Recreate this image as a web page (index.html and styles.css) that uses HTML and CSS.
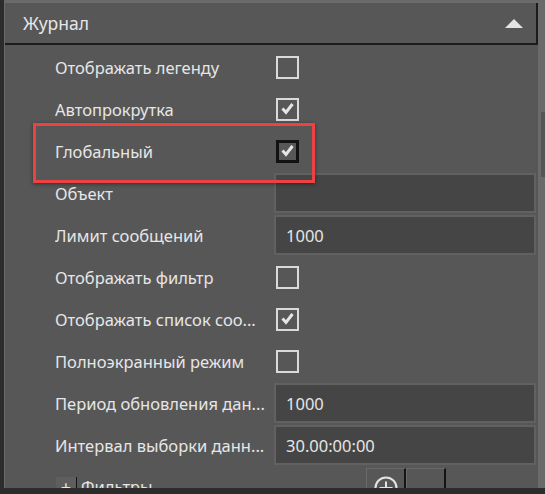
FILE: index.html
```html
<!DOCTYPE html>
<html lang="ru">
<head>
<meta charset="utf-8">
<title>Журнал</title>
<link rel="stylesheet" href="styles.css">
</head>
<body>
<div class="frame">
  <div class="panel">
    <div class="header">
      <span class="title">Журнал</span>
      <svg class="caret" width="18" height="9" viewBox="0 0 18 9"><polygon points="0,9 9,0 18,9" fill="#e4e4e4"/></svg>
    </div>
    <div class="rows">
      <div class="row"><span class="label">Отображать легенду</span><span class="check"></span></div>
      <div class="row"><span class="label">Автопрокрутка</span><span class="check"><svg class="tick" width="19" height="19" viewBox="0 0 19 19"><polyline points="4.5,8.5 8,12.5 14.5,4" fill="none" stroke="#e6e6e6" stroke-width="3"/></svg></span></div>
      <div class="row"><span class="label">Глобальный</span><span class="check focused"><svg class="tick" width="17" height="17" viewBox="0 0 17 17"><polyline points="3.5,7.5 7,11.5 13.5,3" fill="none" stroke="#e6e6e6" stroke-width="3"/></svg></span></div>
      <div class="row"><span class="label">Объект</span><span class="input"></span></div>
      <div class="row"><span class="label">Лимит сообщений</span><span class="input">1000</span></div>
      <div class="row"><span class="label">Отображать фильтр</span><span class="check"></span></div>
      <div class="row"><span class="label">Отображать список соо...</span><span class="check"><svg class="tick" width="19" height="19" viewBox="0 0 19 19"><polyline points="4.5,8.5 8,12.5 14.5,4" fill="none" stroke="#e6e6e6" stroke-width="3"/></svg></span></div>
      <div class="row"><span class="label">Полноэкранный режим</span><span class="check"></span></div>
      <div class="row"><span class="label">Период обновления дан...</span><span class="input">1000</span></div>
      <div class="row"><span class="label">Интервал выборки данн...</span><span class="input">30.00:00:00</span></div>
    </div>
    <div class="filters">
      <div class="filters-head">
        <span class="toggle">+</span>
        <span class="filters-label">Фильтры</span>
      </div>
      <span class="btn"><svg class="add" width="24" height="24" viewBox="0 0 24 24"><circle cx="12" cy="12" r="10.5" fill="none" stroke="#e4e4e4" stroke-width="2"/><path d="M12 5.5V18.5M5.5 12H18.5" stroke="#e4e4e4" stroke-width="2"/></svg></span>
      <span class="btn"></span>
    </div>
    <div class="highlight"></div>
  </div>
  <div class="scrollbar"><div class="thumb"></div></div>
</div>
</body>
</html>
```
FILE: styles.css
```css
html, body {
  margin: 0;
  padding: 0;
  background: #2c2c2c;
  width: 545px;
  height: 494px;
  overflow: hidden;
}

body {
  font-family: "Noto Sans", "Open Sans", sans-serif;
  font-size: 16.5px;
  color: #e6e6e6;
}

.frame {
  margin-left: 4px;
  height: 488px;
  padding: 3px 0 0 1px;
  box-sizing: border-box;
  background: #6a6a6a;
  display: grid;
  grid-template-columns: 533px 7px;
  overflow: hidden;
}

.panel {
  position: relative;
  background: #575757;
  overflow: hidden;
}

.header {
  height: 40px;
  border-bottom: 2px solid #1c1c1c;
  border-right: 2px solid #1c1c1c;
  display: flex;
  align-items: center;
  justify-content: space-between;
  padding: 0 13px 0 18px;
}

.title {
  font-size: 17.5px;
}

.caret {
  display: block;
  margin-top: 1px;
}

.rows {
  padding-top: 1px;
}

.row {
  height: 42px;
  display: grid;
  grid-template-columns: 219px 262px;
  padding-left: 50px;
  align-items: center;
}

.label {
  white-space: nowrap;
  overflow: hidden;
}

.check {
  width: 23px;
  height: 23px;
  box-sizing: border-box;
  border: 2px solid #dadada;
  margin-left: 2px;
  display: flex;
  align-items: center;
  justify-content: center;
}

.check.focused {
  border: 3px solid #121212;
}

.tick {
  display: block;
}

.input {
  height: 40px;
  box-sizing: border-box;
  border: 2px solid #616161;
  background: #454545;
  padding-left: 10px;
  display: flex;
  align-items: center;
}

.filters {
  margin-top: 2px;
  height: 40px;
  padding-left: 51px;
  display: flex;
}

.filters-head {
  width: 310px;
  flex: none;
  display: flex;
  align-items: flex-start;
}

.toggle {
  margin-top: 9px;
  width: 20px;
  height: 20px;
  background: #5e5e5e;
  border-right: 1px solid #151515;
  display: flex;
  align-items: center;
  justify-content: center;
  font-size: 18px;
  line-height: 20px;
}

.filters-label {
  margin: 9px 0 0 4px;
  line-height: 20px;
}

.btn {
  width: 37px;
  height: 40px;
  border-top: 1px solid #6a6a6a;
  border-left: 1px solid #6a6a6a;
  border-right: 2px solid #151515;
  display: flex;
  justify-content: center;
  align-items: flex-start;
}

.add {
  display: block;
  margin-top: 7px;
}

.highlight {
  position: absolute;
  left: 28px;
  top: 120px;
  width: 282px;
  height: 60px;
  box-sizing: border-box;
  border: 3px solid #ec4242;
  box-shadow: 0 1px 4px rgba(0, 0, 0, 0.45);
}

.scrollbar {
  background: #6a6a6a;
}

.thumb {
  margin: 109px 0 0 3px;
  width: 4px;
  height: 65px;
  background: #555555;
}
```
